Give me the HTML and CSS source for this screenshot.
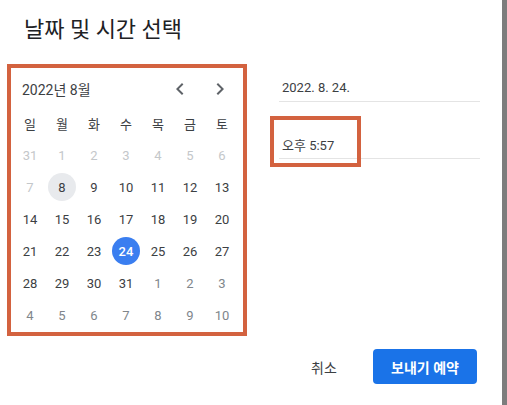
FILE: index.html
```html
<!DOCTYPE html>
<html lang="ko">
<head>
<meta charset="utf-8">
<link rel="stylesheet" href="styles.css">
</head>
<body>
<div class="shell">
  <div class="dialog">
    <h1 class="title">날짜 및 시간 선택</h1>
    <div class="main">
      <div class="calendar">
        <div class="cal-head">
          <span class="month">2022년 8월</span>
          <div class="navs">
            <svg class="nav" viewBox="0 0 24 24" width="24" height="24"><path d="M15.41 7.41L14 6l-6 6 6 6 1.41-1.41L10.83 12z"/></svg>
            <svg class="nav" viewBox="0 0 24 24" width="24" height="24"><path d="M8.59 16.59L10 18l6-6-6-6-1.41 1.41L13.17 12z"/></svg>
          </div>
        </div>
        <div class="grid">
          <span class="wd">일</span><span class="wd">월</span><span class="wd">화</span><span class="wd">수</span><span class="wd">목</span><span class="wd">금</span><span class="wd">토</span>
          <span class="d prev">31</span><span class="d prev">1</span><span class="d prev">2</span><span class="d prev">3</span><span class="d prev">4</span><span class="d prev">5</span><span class="d prev">6</span>
          <span class="d prev">7</span><span class="d"><i class="today">8</i></span><span class="d">9</span><span class="d">10</span><span class="d">11</span><span class="d">12</span><span class="d">13</span>
          <span class="d">14</span><span class="d">15</span><span class="d">16</span><span class="d">17</span><span class="d">18</span><span class="d">19</span><span class="d">20</span>
          <span class="d">21</span><span class="d">22</span><span class="d">23</span><span class="d"><i class="sel">24</i></span><span class="d">25</span><span class="d">26</span><span class="d">27</span>
          <span class="d">28</span><span class="d">29</span><span class="d">30</span><span class="d">31</span><span class="d next">1</span><span class="d next">2</span><span class="d next">3</span>
          <span class="d next">4</span><span class="d next">5</span><span class="d next">6</span><span class="d next">7</span><span class="d next">8</span><span class="d next">9</span><span class="d next">10</span>
        </div>
      </div>
      <div class="fields">
        <div class="field date">2022. 8. 24.</div>
        <div class="field time">오후 5:57<span class="mark"></span></div>
      </div>
    </div>
    <div class="footer">
      <button class="btn cancel">취소</button>
      <button class="btn primary">보내기 예약</button>
    </div>
  </div>
  <div class="scrollbar"></div>
</div>
</body>
</html>
```
FILE: styles.css
```css
* { box-sizing: border-box; }
html, body { margin: 0; padding: 0; background: #fff; }
body {
  font-family: Roboto, "Noto Sans CJK KR", sans-serif;
  color: #3c4043;
  width: 507px;
  height: 405px;
  overflow: hidden;
}
.shell { display: flex; height: 405px; }
.dialog { flex: 1; }
.scrollbar { width: 5px; background: #7d7d7d; }

.title {
  margin: 15px 0 0 24px;
  font-size: 22px;
  line-height: 30px;
  font-weight: 400;
  color: #202124;
}
.main {
  display: flex;
  align-items: flex-start;
  margin-top: 19px;
  padding-left: 7px;
}
.calendar {
  width: 240px;
  height: 272px;
  border: 4px solid #d3623f;
}
.cal-head {
  display: flex;
  align-items: center;
  justify-content: space-between;
  height: 39px;
  padding: 2px 11px 0 11px;
}
.month { font-size: 14px; color: #3c4043; }
.navs { display: flex; gap: 16px; }
.nav { fill: #5f6368; display: block; }

.grid {
  display: grid;
  grid-template-columns: repeat(7, 32px);
  grid-auto-rows: 32px;
  padding-left: 3px;
}
.wd, .d {
  display: flex;
  align-items: center;
  justify-content: center;
  font-size: 13px;
}
.wd { color: #3c4043; }
.d { color: #3c4043; }
.d.prev { color: #c4c7ca; }
.d.next { color: #80868b; }
.today, .sel {
  font-style: normal;
  width: 28px;
  height: 28px;
  border-radius: 50%;
  display: flex;
  align-items: center;
  justify-content: center;
}
.today { background: #e8eaed; }
.sel { background: #3a7ef0; color: #fff; font-weight: 500; }

.fields {
  margin-left: 32px;
  width: 201px;
}
.field {
  font-size: 13px;
  line-height: 20px;
  color: #3c4043;
  padding-left: 3px;
  border-bottom: 1px solid #e4e4e4;
}
.date { margin-top: 14px; padding-bottom: 3px; }
.time { margin-top: 34px; padding-bottom: 2px; position: relative; }
.mark {
  position: absolute;
  left: -9px;
  top: -20px;
  width: 91px;
  height: 51px;
  border: 4px solid #d3623f;
}

.footer {
  display: flex;
  justify-content: flex-end;
  align-items: center;
  gap: 17px;
  margin-top: 13px;
  padding-right: 25px;
}
.btn {
  font-family: Roboto, "Noto Sans CJK KR", sans-serif;
  font-size: 14px;
  height: 35px;
  border: none;
  border-radius: 4px;
  cursor: pointer;
}
.cancel { background: transparent; color: #3c4043; width: 64px; padding: 0; }
.primary {
  background: #1a73e8;
  color: #fff;
  font-weight: 700;
  width: 104px;
  padding: 0;
}
```
